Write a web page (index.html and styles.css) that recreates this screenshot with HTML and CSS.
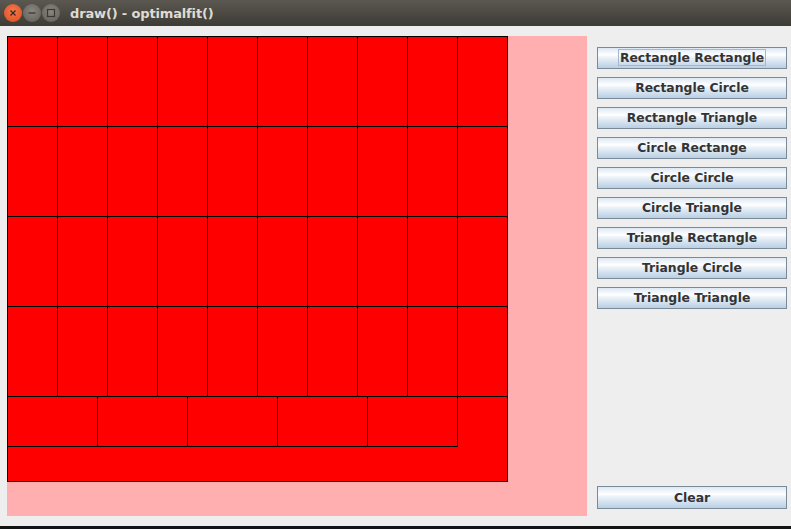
FILE: index.html
```html
<!DOCTYPE html>
<html>
<head>
<meta charset="utf-8">
<link rel="stylesheet" href="styles.css">
</head>
<body>
<div class="window">
  <div class="titlebar">
    <div class="controls">
      <span class="ctl close"><svg width="18" height="18" viewBox="0 0 18 18"><path d="M6.5 6.5 L11.5 11.5 M11.5 6.5 L6.5 11.5" stroke="#3a2a22" stroke-width="1.3" fill="none"/></svg></span>
      <span class="ctl"><svg width="18" height="18" viewBox="0 0 18 18"><path d="M5.5 9 H12.5" stroke="#3a3934" stroke-width="1.3" fill="none"/></svg></span>
      <span class="ctl"><svg width="18" height="18" viewBox="0 0 18 18"><rect x="5.5" y="5.5" width="7" height="7" stroke="#3a3934" stroke-width="1.2" fill="none"/></svg></span>
    </div>
    <div class="title">draw() - optimalfit()</div>
  </div>
  <div class="content">
    <div class="canvas">
      <svg class="drawing" width="580" height="480" viewBox="0 0 580 480" shape-rendering="crispEdges">
        <g fill="#ff0000" stroke="#000" stroke-width="1">
          <rect x="0.5" y="0.5" width="500" height="445"/>
          <rect x="0.5" y="0.5" width="50" height="90"/><rect x="50.5" y="0.5" width="50" height="90"/><rect x="100.5" y="0.5" width="50" height="90"/><rect x="150.5" y="0.5" width="50" height="90"/><rect x="200.5" y="0.5" width="50" height="90"/><rect x="250.5" y="0.5" width="50" height="90"/><rect x="300.5" y="0.5" width="50" height="90"/><rect x="350.5" y="0.5" width="50" height="90"/><rect x="400.5" y="0.5" width="50" height="90"/><rect x="450.5" y="0.5" width="50" height="90"/>
          <rect x="0.5" y="90.5" width="50" height="90"/><rect x="50.5" y="90.5" width="50" height="90"/><rect x="100.5" y="90.5" width="50" height="90"/><rect x="150.5" y="90.5" width="50" height="90"/><rect x="200.5" y="90.5" width="50" height="90"/><rect x="250.5" y="90.5" width="50" height="90"/><rect x="300.5" y="90.5" width="50" height="90"/><rect x="350.5" y="90.5" width="50" height="90"/><rect x="400.5" y="90.5" width="50" height="90"/><rect x="450.5" y="90.5" width="50" height="90"/>
          <rect x="0.5" y="180.5" width="50" height="90"/><rect x="50.5" y="180.5" width="50" height="90"/><rect x="100.5" y="180.5" width="50" height="90"/><rect x="150.5" y="180.5" width="50" height="90"/><rect x="200.5" y="180.5" width="50" height="90"/><rect x="250.5" y="180.5" width="50" height="90"/><rect x="300.5" y="180.5" width="50" height="90"/><rect x="350.5" y="180.5" width="50" height="90"/><rect x="400.5" y="180.5" width="50" height="90"/><rect x="450.5" y="180.5" width="50" height="90"/>
          <rect x="0.5" y="270.5" width="50" height="90"/><rect x="50.5" y="270.5" width="50" height="90"/><rect x="100.5" y="270.5" width="50" height="90"/><rect x="150.5" y="270.5" width="50" height="90"/><rect x="200.5" y="270.5" width="50" height="90"/><rect x="250.5" y="270.5" width="50" height="90"/><rect x="300.5" y="270.5" width="50" height="90"/><rect x="350.5" y="270.5" width="50" height="90"/><rect x="400.5" y="270.5" width="50" height="90"/><rect x="450.5" y="270.5" width="50" height="90"/>
          <rect x="0.5" y="360.5" width="90" height="50"/><rect x="90.5" y="360.5" width="90" height="50"/><rect x="180.5" y="360.5" width="90" height="50"/><rect x="270.5" y="360.5" width="90" height="50"/><rect x="360.5" y="360.5" width="90" height="50"/>
        </g>
      </svg>
    </div>
    <div class="sidebar">
      <div class="buttons">
        <button class="btn"><span class="focus">Rectangle Rectangle</span></button>
        <button class="btn">Rectangle Circle</button>
        <button class="btn">Rectangle Triangle</button>
        <button class="btn">Circle Rectange</button>
        <button class="btn">Circle Circle</button>
        <button class="btn">Circle Triangle</button>
        <button class="btn">Triangle Rectangle</button>
        <button class="btn">Triangle Circle</button>
        <button class="btn">Triangle Triangle</button>
      </div>
      <button class="btn clear">Clear</button>
    </div>
  </div>
  <div class="bottom"></div>
</div>
</body>
</html>
```

FILE: styles.css
```css
html, body {
  margin: 0;
  padding: 0;
  background: #eeeeee;
}
.window {
  width: 791px;
  height: 529px;
  display: flex;
  flex-direction: column;
  overflow: hidden;
}
.titlebar {
  height: 26px;
  flex: none;
  display: flex;
  align-items: center;
  background: linear-gradient(#5b5851, #3d3b35);
}
.controls {
  display: flex;
  gap: 1px;
  padding-left: 4px;
}
.ctl {
  width: 18px;
  height: 18px;
  border-radius: 50%;
  background: radial-gradient(circle at 50% 40%, #8a8780, #5f5c56);
  display: flex;
}
.ctl.close {
  background: radial-gradient(circle at 50% 40%, #f47a4e, #dd4a1c);
}
.title {
  margin-left: 10px;
  font-family: "DejaVu Sans", sans-serif;
  font-weight: bold;
  font-size: 13px;
  letter-spacing: -0.15px;
  color: #dfdbd2;
}
.content {
  flex: 1;
  display: flex;
  padding: 10px 0 0 7px;
  gap: 10px;
  min-height: 0;
}
.canvas {
  width: 580px;
  height: 480px;
  background: #ffafaf;
  flex: none;
}
.drawing {
  display: block;
}
.sidebar {
  width: 190px;
  display: flex;
  flex-direction: column;
  justify-content: space-between;
  padding: 11px 0 17px;
}
.buttons {
  display: flex;
  flex-direction: column;
  gap: 8px;
}
.btn {
  height: 22px;
  width: 190px;
  margin: 0;
  padding: 0 0 1px;
  box-sizing: border-box;
  border: 1px solid #7a8a99;
  background: linear-gradient(#dde8f3 0%, #ffffff 35%, #eef3f9 45%, #b8cfe5 100%);
  font-family: "DejaVu Sans", sans-serif;
  font-weight: bold;
  font-size: 12.4px;
  color: #333333;
  display: flex;
  align-items: center;
  justify-content: center;
}
.btn.clear {
  height: 23px;
}
.focus {
  border: 1px solid #a3b8cc;
  padding: 0 1px;
  line-height: 15px;
}
.bottom {
  height: 3px;
  flex: none;
  background: #131515;
}
```
